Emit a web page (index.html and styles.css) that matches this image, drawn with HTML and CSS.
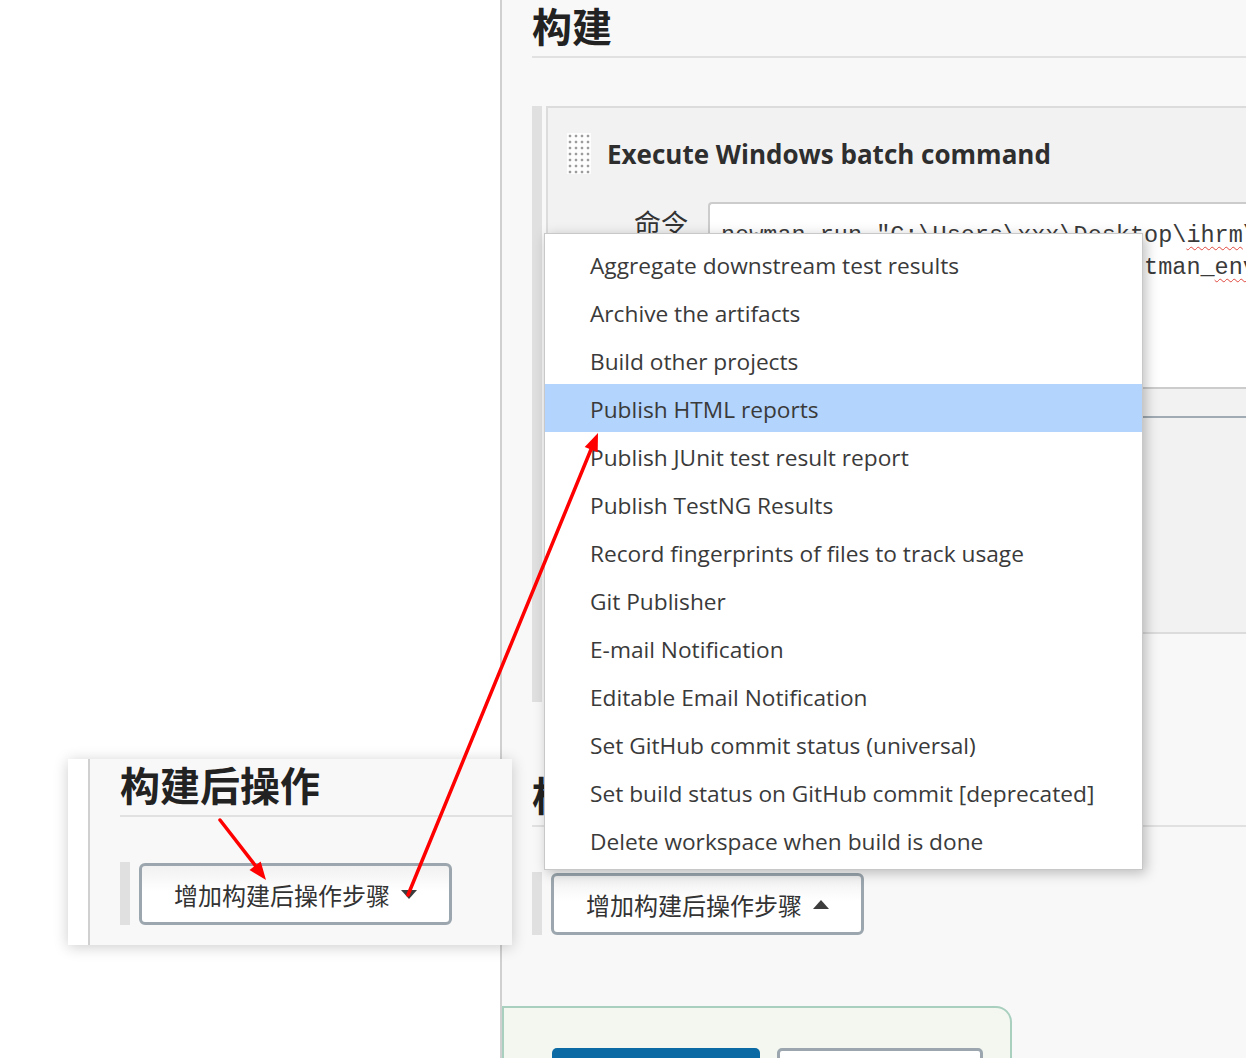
FILE: index.html
```html
<!DOCTYPE html>
<html lang="zh-CN">
<head>
<meta charset="utf-8">
<title>Jenkins 配置</title>
<link rel="stylesheet" href="styles.css">
</head>
<body>
<div class="page">
  <aside class="side"></aside>
  <main class="main">
    <h2 class="section-title">构建</h2>
    <div class="builders">
      <div class="card">
        <div class="card-head">
          <span class="grip"></span>
          <span class="card-title">Execute Windows batch command</span>
        </div>
        <div class="field">
          <label class="field-label">命令</label>
          <div class="code">newman run "C:\Users\xxx\Desktop\<span class="typo">ihrm</span>\ihrm.postman_collection.json"
  -e "C:\Users\xxx\Desktop\postman_<span class="typo">env</span>.json"</div>
        </div>
        <div class="advanced"></div>
      </div>
      <button class="add-btn hidden-btn">增加构建步骤<span class="caret down"></span></button>
    </div>
    <h2 class="section-title second">构建后操作</h2>
    <div class="publish-bar">
      <button class="add-btn">增加构建后操作步骤<span class="caret up"></span></button>
    </div>
    <div class="bottom-bar">
      <button class="btn primary">保存</button>
      <button class="btn">应用</button>
    </div>
  </main>

  <div class="inset">
    <div class="inset-white"></div>
    <div class="inset-body">
      <h2 class="section-title">构建后操作</h2>
      <div class="publish-bar">
        <button class="add-btn">增加构建后操作步骤<span class="caret down"></span></button>
      </div>
    </div>
  </div>

  <ul class="menu">
    <li>Aggregate downstream test results</li>
    <li>Archive the artifacts</li>
    <li>Build other projects</li>
    <li class="active">Publish HTML reports</li>
    <li>Publish JUnit test result report</li>
    <li>Publish TestNG Results</li>
    <li>Record fingerprints of files to track usage</li>
    <li>Git Publisher</li>
    <li>E-mail Notification</li>
    <li>Editable Email Notification</li>
    <li>Set GitHub commit status (universal)</li>
    <li>Set build status on GitHub commit [deprecated]</li>
    <li>Delete workspace when build is done</li>
  </ul>

  <svg class="annot" width="1246" height="1058" viewBox="0 0 1246 1058">
    <line x1="220" y1="820" x2="258" y2="869" stroke="#ff0000" stroke-width="3.5" stroke-linecap="round"/>
    <polygon points="266,880 249.5,870 260.7,861.4" fill="#ff0000"/>
    <line x1="408" y1="895" x2="592" y2="447" stroke="#ff0000" stroke-width="3.5" stroke-linecap="round"/>
    <polygon points="598,433 597.7,452.3 584.7,446.9" fill="#ff0000"/>
  </svg>
</div>
</body>
</html>
```

FILE: styles.css
```css
body {
  margin: 0;
  font-family: "Noto Sans CJK SC", "Noto Sans", sans-serif;
  color: #333;
}

.page {
  position: relative;
  width: 1246px;
  height: 1058px;
  overflow: hidden;
  display: flex;
  background: #fff;
}

.side {
  width: 500px;
  flex: none;
  background: #fff;
  border-right: 2px solid #d0d0d0;
}

.main {
  flex: 1;
  min-width: 0;
  background: #f8f8f8;
  padding-left: 30px;
}

.section-title {
  margin: 0;
  font-size: 40px;
  line-height: 50px;
  font-weight: 700;
  color: #222;
  padding-bottom: 6px;
  border-bottom: 2px solid #e1e1e1;
  white-space: nowrap;
}

.section-title.second {
  margin-top: 67px;
}

.builders {
  margin-top: 48px;
  margin-right: -120px;
  border-left: 10px solid #e0e0e0;
  padding-left: 4px;
}

.card {
  background: #f2f2f2;
  border: 2px solid #dcdcdc;
  border-right: none;
}

.card-head {
  display: flex;
  align-items: center;
  gap: 16px;
  padding: 25px 0 28px 19px;
}

.grip {
  width: 24px;
  height: 41px;
  flex: none;
  background-color: #fdfdfd;
  background-image: radial-gradient(circle, #9c9c9c 1.1px, transparent 1.7px);
  background-size: 6px 6px;
  background-position: 0 0;
}

.card-title {
  font-family: "Open Sans", "Noto Sans", sans-serif;
  font-weight: 700;
  font-size: 26px;
  line-height: 36px;
  color: #2e2e2e;
}

.field {
  display: flex;
  align-items: flex-start;
}

.field-label {
  width: 160px;
  flex: none;
  box-sizing: border-box;
  padding-right: 20px;
  padding-top: 3px;
  text-align: right;
  font-size: 27px;
  line-height: 36px;
  color: #333;
}

.code {
  flex: 1;
  height: 187px;
  box-sizing: border-box;
  border: 2px solid #cccccc;
  border-right: none;
  border-radius: 4px 0 0 4px;
  background: #fff;
  padding: 16px 11px 0;
  font-family: "Liberation Mono", monospace;
  font-size: 23.5px;
  line-height: 32px;
  color: #3a3a3a;
  white-space: pre;
  overflow: hidden;
}

.typo {
  text-decoration: underline wavy #e0483e;
  text-decoration-thickness: 1px;
  text-underline-offset: 4px;
}

.advanced {
  margin-top: 27px;
  margin-left: 160px;
  height: 214px;
  border-top: 2px solid #a0abb3;
  background: #f2f2f2;
}

.add-btn {
  display: inline-flex;
  align-items: center;
  gap: 11px;
  height: 62px;
  box-sizing: border-box;
  border: 3px solid #9ba6ae;
  border-radius: 6px;
  background: linear-gradient(#f1f1f1, #ffffff 45%);
  padding: 0 32px;
  font-family: "Noto Sans CJK SC", sans-serif;
  font-size: 24px;
  color: #333;
}

.hidden-btn {
  margin-top: 12px;
  height: 56px;
}

.caret {
  width: 0;
  height: 0;
  border-left: 8px solid transparent;
  border-right: 8px solid transparent;
}

.caret.up {
  border-bottom: 9px solid #3d3d3d;
}

.caret.down {
  border-top: 9px solid #3d3d3d;
}

.publish-bar {
  display: flex;
  margin-top: 45px;
  border-left: 10px solid #e0e0e0;
  padding: 1px 0 0 9px;
}

.bottom-bar {
  margin-top: 71px;
  margin-left: -30px;
  width: 510px;
  height: 100px;
  box-sizing: border-box;
  border: 2px solid #a9cfbf;
  border-radius: 0 16px 0 0;
  background: #f3f7f0;
  padding: 40px 0 0 48px;
  display: flex;
  gap: 17px;
}

.btn {
  width: 206px;
  height: 52px;
  box-sizing: border-box;
  border: 3px solid #9ba6ae;
  border-radius: 5px;
  background: #fff;
  font-size: 22px;
  padding-top: 30px;
  color: #333;
}

.btn.primary {
  width: 208px;
  border: none;
  background: #0b69a3;
  color: #fff;
}

/* pasted screenshot snippet */
.inset {
  position: absolute;
  left: 68px;
  top: 759px;
  width: 444px;
  height: 186px;
  display: flex;
  box-shadow: 0 2px 14px rgba(0, 0, 0, 0.2);
  overflow: hidden;
}

.inset-white {
  width: 20px;
  flex: none;
  background: #fff;
  border-right: 2px solid #d0d0d0;
}

.inset-body {
  flex: 1;
  background: #f8f8f8;
  padding-left: 30px;
}

/* dropdown menu */
.menu {
  position: absolute;
  left: 544px;
  top: 233px;
  width: 599px;
  box-sizing: border-box;
  margin: 0;
  padding: 6px 0 5px;
  list-style: none;
  background: #fff;
  border: 1px solid #c8c8c8;
  box-shadow: 3px 3px 12px rgba(0, 0, 0, 0.25);
}

.menu li {
  height: 48px;
  line-height: 52px;
  padding-left: 45px;
  font-family: "Open Sans", "Noto Sans", sans-serif;
  font-size: 22.7px;
  color: #3a3a3a;
  white-space: nowrap;
  overflow: hidden;
}

.menu li.active {
  background: #b3d4fc;
}

.annot {
  position: absolute;
  left: 0;
  top: 0;
  pointer-events: none;
}
```
